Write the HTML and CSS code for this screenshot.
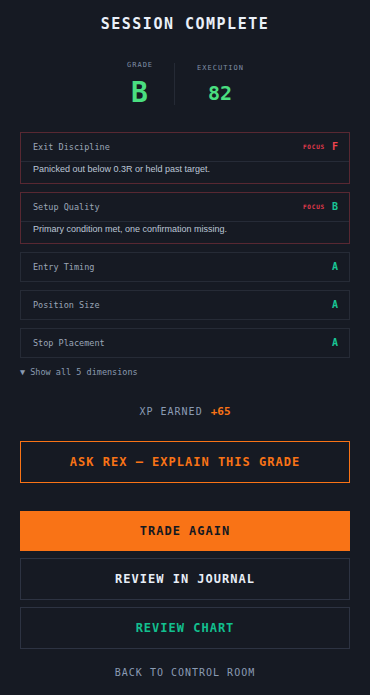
FILE: index.html
```html
<!DOCTYPE html>
<html>
<head>
<meta charset="utf-8">
<link rel="stylesheet" href="styles.css">
</head>
<body>
<main class="page">
  <h1 class="title">SESSION COMPLETE</h1>
  <section class="stats">
    <div class="stat stat-grade">
      <div class="stat-label">GRADE</div>
      <div class="stat-big">B</div>
    </div>
    <div class="stat-divider"></div>
    <div class="stat stat-exec">
      <div class="stat-label">EXECUTION</div>
      <div class="stat-mid">82</div>
    </div>
  </section>

  <section class="cards">
    <div class="card card-focus">
      <div class="card-head">
        <span class="card-name">Exit Discipline</span>
        <span class="card-right"><span class="focus">FOCUS</span><span class="grade grade-f">F</span></span>
      </div>
      <div class="card-body">Panicked out below 0.3R or held past target.</div>
    </div>
    <div class="card card-focus">
      <div class="card-head">
        <span class="card-name">Setup Quality</span>
        <span class="card-right"><span class="focus">FOCUS</span><span class="grade grade-ok">B</span></span>
      </div>
      <div class="card-body">Primary condition met, one confirmation missing.</div>
    </div>
    <div class="card">
      <div class="card-head">
        <span class="card-name">Entry Timing</span>
        <span class="grade grade-ok">A</span>
      </div>
    </div>
    <div class="card">
      <div class="card-head">
        <span class="card-name">Position Size</span>
        <span class="grade grade-ok">A</span>
      </div>
    </div>
    <div class="card">
      <div class="card-head">
        <span class="card-name">Stop Placement</span>
        <span class="grade grade-ok">A</span>
      </div>
    </div>
  </section>

  <div class="show-all">▼ Show all 5 dimensions</div>

  <div class="xp"><span class="xp-label">XP EARNED</span><span class="xp-value">+65</span></div>

  <button class="btn btn-ask">ASK REX — EXPLAIN THIS GRADE</button>

  <div class="actions">
    <button class="btn btn-primary">TRADE AGAIN</button>
    <button class="btn btn-outline">REVIEW IN JOURNAL</button>
    <button class="btn btn-outline btn-green">REVIEW CHART</button>
  </div>

  <div class="back">BACK TO CONTROL ROOM</div>
</main>
</body>
</html>
```
FILE: styles.css
```css
* { box-sizing: border-box; }
html, body { margin: 0; padding: 0; }
body {
  background: #161a23;
  font-family: "DejaVu Sans Mono", "Liberation Mono", monospace;
  color: #e6ecf5;
  width: 370px;
  height: 695px;
  overflow: hidden;
}
.page {
  padding: 16px 20px 0;
  display: flex;
  flex-direction: column;
}
.title {
  margin: 0;
  text-align: center;
  font-size: 15px;
  font-weight: bold;
  letter-spacing: 1.5px;
  line-height: 17.5px;
  color: #eaf0f8;
}
.stats {
  margin-top: 27px;
  display: flex;
  justify-content: center;
  align-items: center;
}
.stat {
  display: flex;
  flex-direction: column;
  align-items: center;
  padding: 0 22px;
}
.stat-label {
  font-size: 7px;
  letter-spacing: 1px;
  line-height: 8px;
  color: #7f8ea5;
  margin-right: -1px;
}
.stat-big {
  margin-top: 10px;
  font-size: 28px;
  line-height: 28px;
  font-weight: bold;
  color: #4ade80;
}
.stat-mid {
  margin-top: 11px;
  font-size: 20px;
  line-height: 20px;
  font-weight: bold;
  color: #4ade80;
}
.stat-divider {
  width: 1px;
  height: 42px;
  background: #252a35;
  align-self: center;
  margin-top: 1px;
}
.cards {
  margin-top: 25px;
  display: flex;
  flex-direction: column;
  gap: 8px;
}
.card {
  border: 1px solid #262b36;
}
.card-focus {
  border-color: #582832;
}
.card-head {
  height: 28px;
  padding: 0 11px 0 12px;
  display: flex;
  align-items: center;
  justify-content: space-between;
}
.card-focus .card-head {
  height: 29px;
  border-bottom: 1px solid #262b37;
}
.card-name {
  font-size: 8.5px;
  color: #9ba6b7;
}
.card-right {
  display: flex;
  align-items: center;
  gap: 7px;
}
.focus {
  font-size: 6px;
  font-weight: bold;
  letter-spacing: 0.8px;
  color: #e23a4d;
}
.grade {
  font-size: 10px;
  font-weight: bold;
}
.grade-f { color: #f0444f; }
.grade-ok { color: #19c595; }
.card-body {
  font-family: "Liberation Sans", "Noto Sans", sans-serif;
  font-size: 9px;
  line-height: 12px;
  padding: 1px 12px 8px;
  color: #bcc6d6;
}
.show-all {
  margin-top: 9px;
  font-size: 8.5px;
  color: #8a9ab1;
}
.xp {
  margin-top: 28px;
  display: flex;
  justify-content: center;
  align-items: baseline;
  gap: 8px;
}
.xp-label {
  font-size: 10px;
  letter-spacing: 1px;
  color: #8a9bb3;
}
.xp-value {
  font-size: 11px;
  font-weight: bold;
  color: #f97316;
}
.btn {
  display: flex;
  align-items: center;
  justify-content: center;
  width: 100%;
  margin: 0;
  font-family: "DejaVu Sans Mono", "Liberation Mono", monospace;
  font-size: 12px;
  font-weight: bold;
  letter-spacing: 1px;
  background: transparent;
  cursor: pointer;
}
.btn-ask {
  margin-top: 23px;
  height: 42px;
  border: 1px solid #f97316;
  color: #f97316;
}
.actions {
  margin-top: 28px;
  display: flex;
  flex-direction: column;
  gap: 7px;
}
.btn-primary {
  height: 40px;
  border: none;
  background: #f97316;
  color: #141820;
}
.btn-outline {
  height: 42px;
  border: 1px solid #2d3342;
  color: #e8eef7;
}
.btn-green {
  color: #12c08f;
}
.back {
  margin-top: 18px;
  text-align: center;
  font-size: 10px;
  letter-spacing: 1px;
  color: #8a9bb3;
}
```
